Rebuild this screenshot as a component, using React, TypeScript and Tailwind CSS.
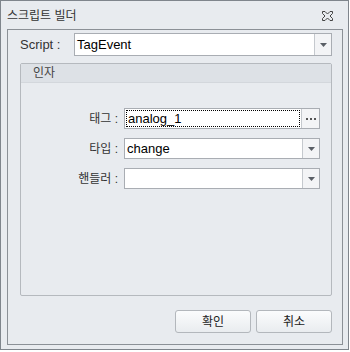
import React from "react";

const font = { fontFamily: '"Liberation Sans", "Noto Sans CJK KR", sans-serif' };

function Arrow() {
  return (
    <svg width="7" height="4" viewBox="0 0 7 4">
      <path d="M0 0 L7 0 L3.5 4 Z" fill="#5a5f66" />
    </svg>
  );
}

function Combo({ value, className }: { value: string; className: string }) {
  return (
    <div className={`flex border border-[#a9adb3] bg-white ${className}`}>
      <div className="flex-1 flex items-center pl-[2px] text-[13px] text-black">{value}</div>
      <div className="w-[17px] border-l border-[#c5c9ce] bg-[#f3f4f6] flex items-center justify-center">
        <Arrow />
      </div>
    </div>
  );
}

function Row({ label, children }: { label: string; children: React.ReactNode }) {
  return (
    <div className="flex items-center h-[21px]">
      <div className="w-[103px] text-right pr-[6px] text-[12px] text-[#333]">{label}</div>
      {children}
    </div>
  );
}

export default function App() {
  return (
    <div className="w-[350px] h-[352px] bg-white" style={font}>
      <div className="w-[349px] h-[350px] border border-[#7f858c] bg-[#e8ebef] flex flex-col">
        <div className="h-[28px] flex items-center justify-between pl-[6px] pr-[15px]">
          <span className="text-[12px] text-[#333] pt-[2px]">스크립트 빌더</span>
          <svg width="11" height="10" viewBox="0 0 11 10" className="mt-[2px]">
            <path
              d="M0.5 0.5 H3 L5.5 3 L8 0.5 H10.5 V2.5 L8 5 L10.5 7.5 V9.5 H8 L5.5 7 L3 9.5 H0.5 V7.5 L3 5 L0.5 2.5 Z"
              fill="none"
              stroke="#444"
              strokeWidth="1"
            />
          </svg>
        </div>
        <div className="ml-[6px] mr-[5px] mb-[4px] flex-1 border border-[#8b9096] flex flex-col pl-[12px] pr-[9px] pt-[3px]">
          <div className="flex items-center h-[23px]">
            <div className="w-[54px] text-[13px] text-[#333]">Script :</div>
            <Combo value="TagEvent" className="w-[258px] h-[23px]" />
          </div>
          <div className="mt-[7px] w-[312px] h-[233px] border border-[#b5b9be] rounded-[2px] flex flex-col">
            <div className="h-[19px] bg-[#dde1e6] border-b border-[#d3d7dc] flex items-center pl-[12px] text-[12px] text-[#444]">
              인자
            </div>
            <div className="flex flex-col gap-[9px] pt-[25px]">
              <Row label="태그 :">
                <div className="flex w-[196px] h-[21px] border border-[#a9adb3] bg-white">
                  <div className="flex-1 m-[1px] border border-dotted border-black flex items-center pl-[1px] text-[13px] text-black">
                    analog_1
                  </div>
                  <div className="w-[18px] border-l border-[#c5c9ce] bg-[#f3f4f6] flex items-center justify-center gap-[2px]">
                    <span className="w-[2px] h-[2px] bg-[#555]" />
                    <span className="w-[2px] h-[2px] bg-[#555]" />
                    <span className="w-[2px] h-[2px] bg-[#555]" />
                  </div>
                </div>
              </Row>
              <Row label="타입 :">
                <Combo value="change" className="w-[196px] h-[21px]" />
              </Row>
              <Row label="핸들러 :">
                <Combo value="" className="w-[196px] h-[21px]" />
              </Row>
            </div>
          </div>
          <div className="mt-[14px] flex justify-end gap-[5px] pr-[0px] w-[312px]">
            <button className="w-[76px] h-[23px] border border-[#b3b7bc] rounded-[3px] bg-gradient-to-b from-[#fbfcfd] to-[#e9ecef] text-[12px] text-[#222]">
              확인
            </button>
            <button className="w-[76px] h-[23px] border border-[#b3b7bc] rounded-[3px] bg-gradient-to-b from-[#fbfcfd] to-[#e9ecef] text-[12px] text-[#222]">
              취소
            </button>
          </div>
        </div>
      </div>
    </div>
  );
}
